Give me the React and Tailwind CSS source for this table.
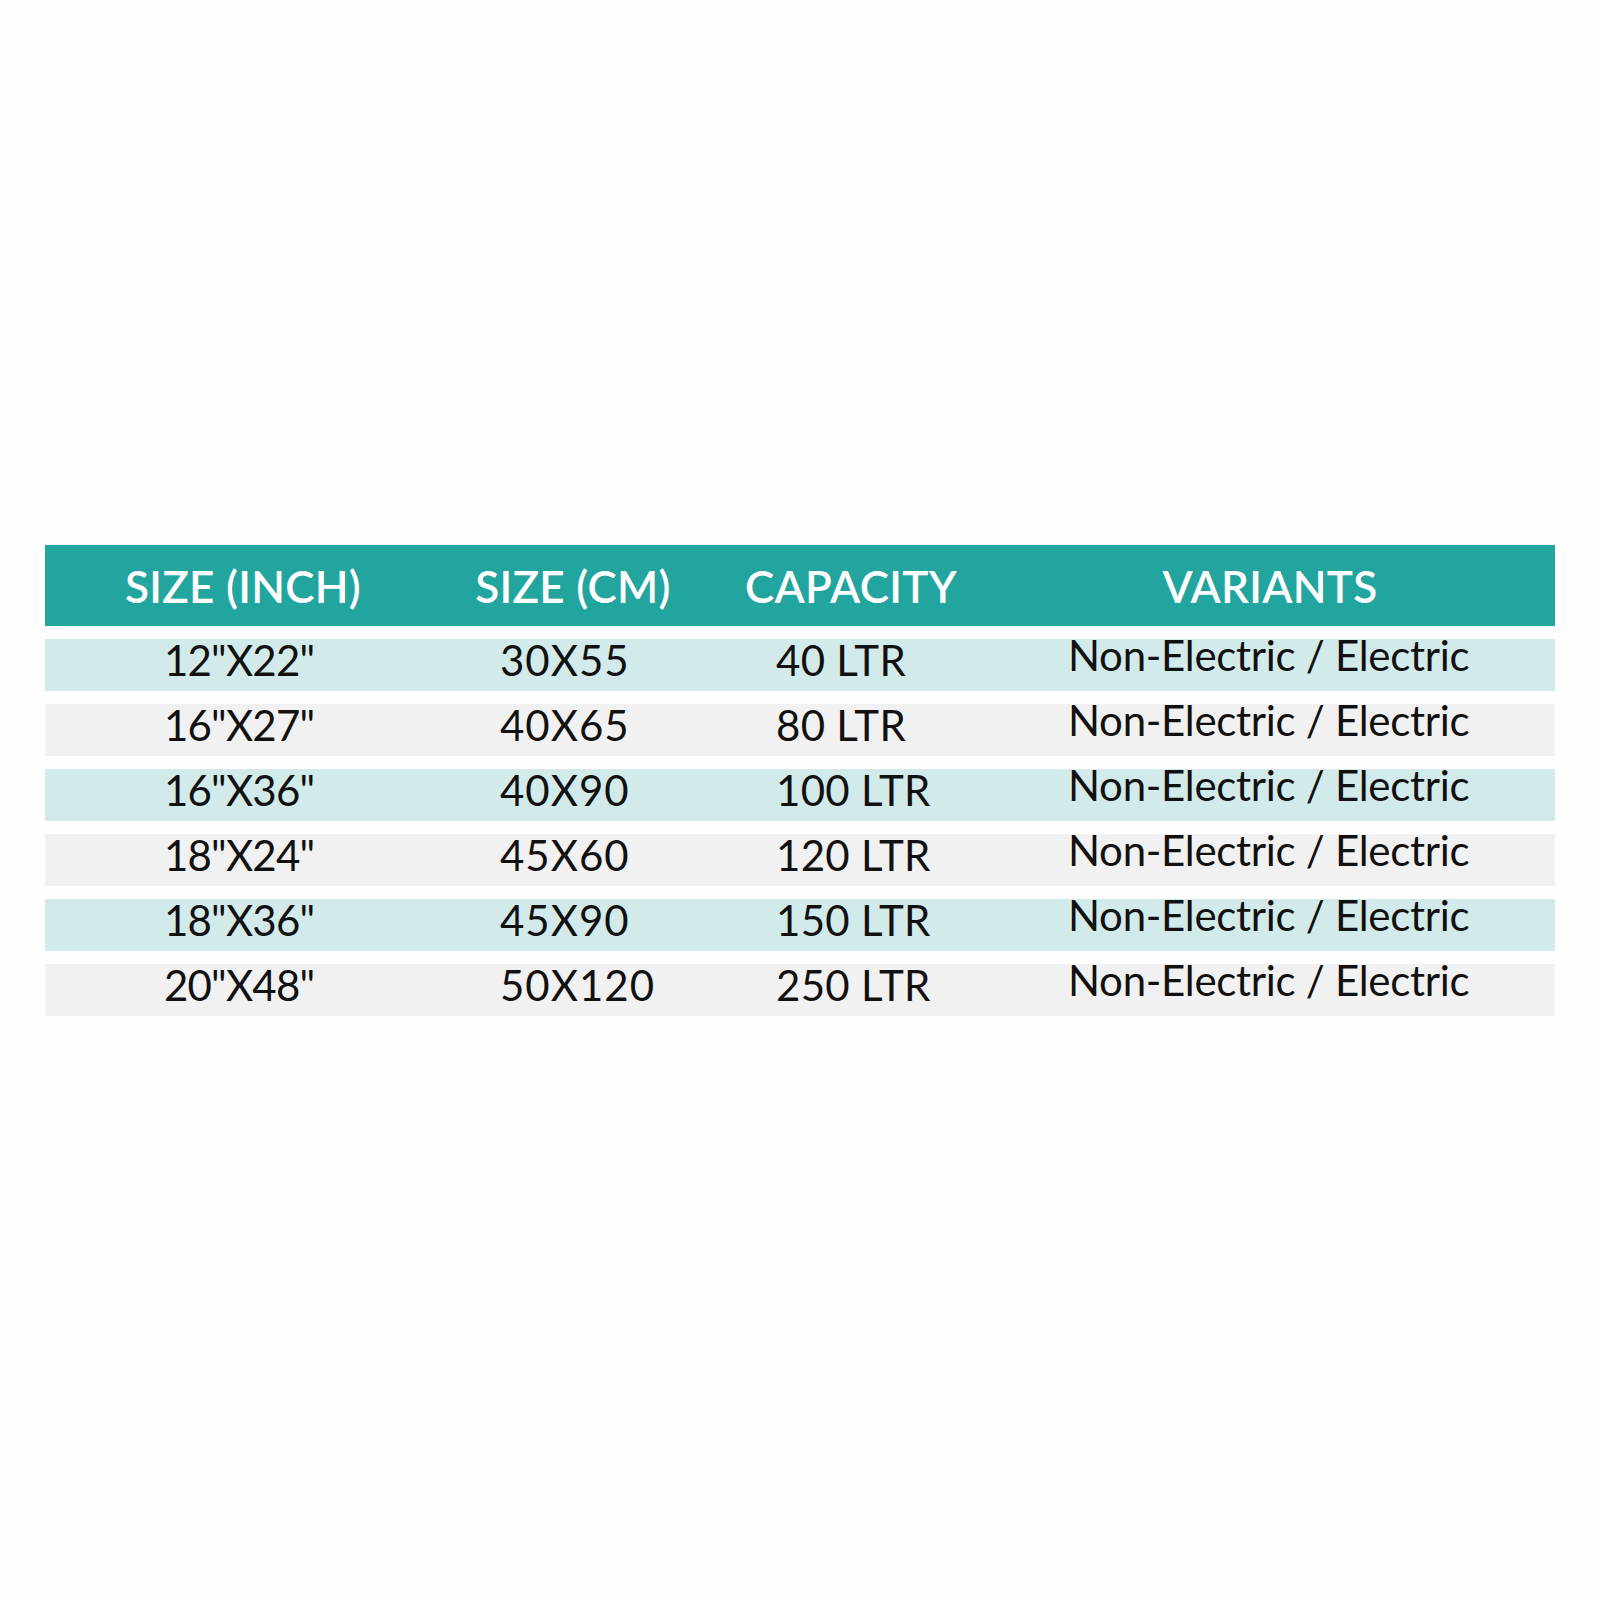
import React from 'react';

const rows = [
  { inch: '12"X22"', cm: '30X55', cap: '40 LTR', tint: true },
  { inch: '16"X27"', cm: '40X65', cap: '80 LTR', tint: false },
  { inch: '16"X36"', cm: '40X90', cap: '100 LTR', tint: true },
  { inch: '18"X24"', cm: '45X60', cap: '120 LTR', tint: false },
  { inch: '18"X36"', cm: '45X90', cap: '150 LTR', tint: true },
  { inch: '20"X48"', cm: '50X120', cap: '250 LTR', tint: false },
];

export default function App() {
  return (
    <div className="w-[1600px] h-[1600px] bg-[#fefefe] pt-[545px] pl-[45px] font-['Lato',sans-serif]">
      <div className="w-[1510px] flex flex-col gap-[13px]">
        {/* Header */}
        <div className="h-[81px] bg-[#22a59f] grid grid-cols-[396px_264px_292px_546px_1fr] items-center text-white text-[44px] font-semibold leading-none tracking-[0.3px]">
          <div className="text-center">SIZE (INCH)</div>
          <div className="text-center">SIZE (CM)</div>
          <div className="text-center">CAPACITY</div>
          <div className="text-center">VARIANTS</div>
          <div />
        </div>

        {/* Rows */}
        {rows.map((row, idx) => (
          <div
            key={idx}
            className={`h-[52px] grid grid-cols-[396px_264px_292px_1fr] items-start text-[#111] text-[42px] leading-none ${
              row.tint ? 'bg-[#d2ebea]' : 'bg-[#f1f1f1]'
            }`}
          >
            <div className="pl-[119px] tracking-[-0.8px]">{row.inch}</div>
            <div className="pl-[59px] tracking-[1px]">{row.cm}</div>
            <div className="pl-[71px] tracking-[0.3px]">{row.cap}</div>
            <div className="pl-[71px] -mt-[5px] tracking-[-0.3px]">Non-Electric / Electric</div>
          </div>
        ))}
      </div>
    </div>
  );
}
